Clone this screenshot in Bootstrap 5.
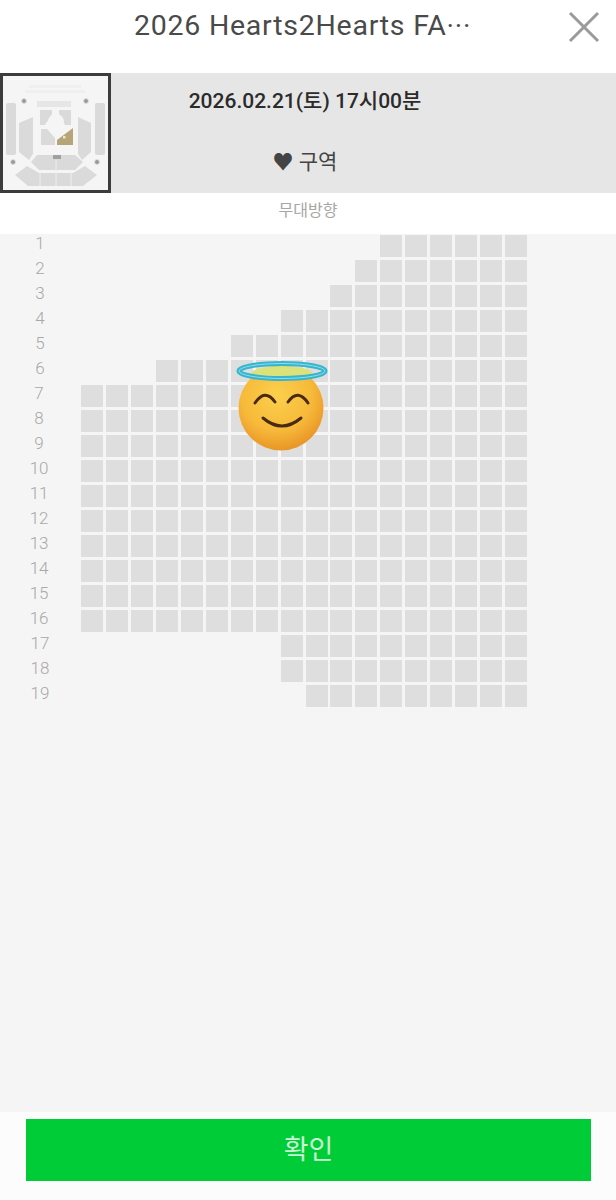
<!DOCTYPE html>
<html lang="ko">
<head>
  <meta charset="UTF-8" />
  <meta name="viewport" content="width=device-width, initial-scale=1" />
  <title>좌석 선택</title>
  <link href="https://cdn.jsdelivr.net/npm/bootstrap@5.3.0/dist/css/bootstrap.min.css" rel="stylesheet" />
  <style>
    body { width: 616px; height: 1200px; font-family: Roboto, "Noto Sans CJK KR", sans-serif; background: #fff; overflow: hidden; }
    .title-bar { height: 73px; padding: 0 16px 20px 16px; }
    .title-text { font-size: 28.5px; color: #4a4a4a; letter-spacing: .75px; line-height: 1; margin-left: 118px; width: 345px; white-space: nowrap; }
    .close-x { margin-left: auto; margin-right: 0; }
    .info-bar { height: 120px; background: #e6e6e6; }
    .map-thumb { width: 111px; height: 120px; border: 3px solid #3c3c3c; background: #f5f5f5; flex: none; }
    .map-thumb svg { filter: blur(.5px); }
    .info-date { width: 388px; font-size: 21px; font-weight: 500; color: #2b2b2b; padding-top: 15px; line-height: 26px; }
    .info-zone { width: 388px; font-size: 21px; color: #444; padding-top: 35px; line-height: 26px; }
    .stage-label { height: 41px; font-size: 16px; color: #a6a6a6; padding-top: 6px; }
    .seat-area { flex: 1 1 auto; background: #f5f5f5; padding: 1px 89px 0 0; position: relative; }
    .seat-row { height: 25px; }
    .row-num { width: 80px; font-size: 17px; color: #a8a8a8; line-height: 17px; font-weight: 300; }
    .seat-box { width: 22px; height: 22px; background: #dedede; margin-left: 2.94px; }
    .halo-emoji { position: absolute; left: 232px; top: 124px; }
    .foot-bar { height: 88px; padding: 7px 25px 19px 26px; background: #fcfcfc; }
    .ok-btn { background: #00cc38; color: #c9f5d4; font-size: 27px; border: 0; border-radius: 0; height: 62px; line-height: 1; }
    .ok-btn:hover { background: #00cc38; color: #c9f5d4; }
  </style>
</head>
<body class="d-flex flex-column">
  <div class="title-bar d-flex align-items-center">
    <div class="title-text">2026 Hearts2Hearts FA···</div>
    <svg class="close-x" width="32" height="32" viewBox="0 0 32 32" aria-label="닫기">
      <path d="M2 2 L30 30 M30 2 L2 30" stroke="#9a9a9a" stroke-width="3" fill="none" />
    </svg>
  </div>

  <div class="info-bar d-flex">
    <div class="map-thumb">
      <svg width="105" height="114" viewBox="0 0 105 114">
        <g fill="#efefef">
          <rect x="26" y="9" width="52" height="3" />
          <rect x="22" y="14" width="60" height="3" />
        </g>
        <rect x="34" y="25" width="34" height="6" fill="#e6e6e6" />
        <g fill="#dadada">
          <rect x="3" y="27" width="10" height="52" rx="2" />
          <rect x="92" y="27" width="10" height="52" rx="2" />
          <path d="M16 47 L30 41 L30 78 L26 84 L16 76 Z" />
          <path d="M88 47 L75 41 L75 78 L79 84 L88 76 Z" />
          <path d="M37 34 H49 V38 L42 49 H37 Z" />
          <path d="M68 34 H56 V38 L62 49 H68 Z" />
          <path d="M38 53 H44 L52 62 V69 H38 Z" />
          <path d="M28 86 L34 79 H72 L80 86 L72 94 H36 Z" />
          <path d="M12 99 L24 90 L36 97 H70 L82 90 L94 99 L80 110 H25 Z" />
        </g>
        <circle cx="53" cy="46" r="8" fill="#f5f5f5" />
        <path d="M54 64 L70 52 V69 H54 Z" fill="#b5a577" />
        <rect x="60" y="60" width="2.500" height="2.500" fill="#eee6c8" />
        <rect x="50" y="79" width="8" height="4" fill="#a0a0a0" />
        <path d="M53 84 V110 M37 96 V110 M68 96 V110" stroke="#efefef" stroke-width="1" />
        <g fill="#999" stroke="#e0e0e0" stroke-width="1">
          <circle cx="21" cy="25" r="2.500" />
          <circle cx="83" cy="25" r="2.500" />
          <circle cx="10" cy="86" r="2.500" />
          <circle cx="94" cy="86" r="2.500" />
        </g>
      </svg>
    </div>
    <div class="text-center">
      <div class="info-date">2026.02.21(토) 17시00분</div>
      <div class="info-zone">♥ 구역</div>
    </div>
  </div>

  <div class="stage-label text-center">무대방향</div>

  <div class="seat-area" id="seat-area">
    <svg class="halo-emoji" width="100" height="95" viewBox="0 0 100 95">
      <defs>
        <radialGradient id="faceFill" cx="45%" cy="35%" r="70%">
          <stop offset="0" stop-color="#fbd04c" />
          <stop offset=".6" stop-color="#f7b93a" />
          <stop offset="1" stop-color="#e58e22" />
        </radialGradient>
      </defs>
      <circle cx="49" cy="50" r="42.500" fill="url(#faceFill)" />
      <ellipse cx="50" cy="15" rx="30" ry="7" fill="#dbe27a" />
      <ellipse cx="50" cy="13" rx="43" ry="7.500" fill="none" stroke="#36b5cf" stroke-width="5" />
      <ellipse cx="50" cy="13" rx="43" ry="7.500" fill="none" stroke="#8fdde8" stroke-width="1" />
      <path d="M23 45 Q33 30 43 44" fill="none" stroke="#4a2a12" stroke-width="3" stroke-linecap="round" />
      <path d="M56 44 Q66 30 76 45" fill="none" stroke="#4a2a12" stroke-width="3" stroke-linecap="round" />
      <path d="M31 60 Q50 76 69 60" fill="none" stroke="#4a2a12" stroke-width="3" stroke-linecap="round" />
    </svg>
  </div>

  <div class="foot-bar">
    <button type="button" class="btn ok-btn w-100">확인</button>
  </div>

  <script>
    // number of seats per row, rows are right aligned
    const ROW_SEATS = [6, 7, 8, 10, 12, 15, 18, 18, 18, 18, 18, 18, 18, 18, 18, 18, 10, 10, 9];
    const area = document.getElementById('seat-area');
    const emoji = area.querySelector('.halo-emoji');

    ROW_SEATS.forEach((count, index) => {
      const row = document.createElement('div');
      row.className = 'seat-row d-flex';
      let html = `<div class="row-num text-center">${index + 1}</div><div class="d-flex ms-auto">`;
      for (let i = 0; i < count; i++) {
        html += '<div class="seat-box"></div>';
      }
      row.innerHTML = html + '</div>';
      area.insertBefore(row, emoji);
    });
  </script>
</body>
</html>
